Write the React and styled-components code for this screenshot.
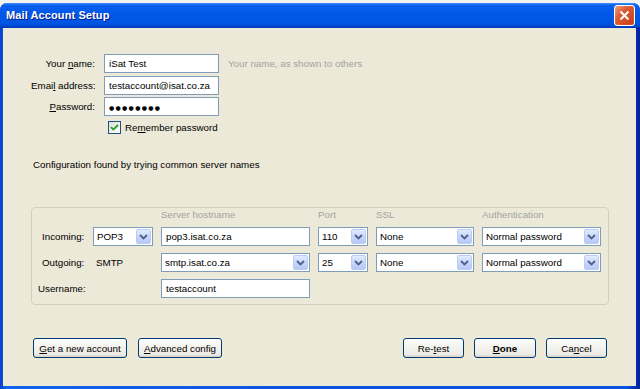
import React from 'react';
import styled, { createGlobalStyle } from 'styled-components';

const Global = createGlobalStyle`
  html, body { margin: 0; padding: 0; background: #f2f2f2; }
  body {
    width: 640px; height: 389px; overflow: hidden;
    font-family: "Liberation Sans", Arial, sans-serif;
    font-size: 9.75px; color: #000;
  }
  #root { height: 389px; }
  * { box-sizing: border-box; }
`;

const Window = styled.div`
  margin-top: 3px;
  height: 386px;
  display: flex;
  flex-direction: column;
  border-radius: 7px 7px 0 0;
  overflow: hidden;
  background: #0a50e2;
`;

const TitleBar = styled.div`
  flex: none;
  height: 25px;
  display: flex;
  align-items: center;
  justify-content: space-between;
  padding: 0 5px 0 6px;
  background: linear-gradient(180deg, #3d8ff7 0%, #0a5eec 10%, #0058e8 45%, #0054e2 82%, #0049d2 92%, #0036b6 100%);
`;

const Title = styled.div`
  color: #fff;
  font-weight: bold;
  font-size: 11px;
  letter-spacing: 0.1px;
  text-shadow: 1px 1px 0 #0b1c8a;
  padding-bottom: 1px;
`;

const CloseButton = styled.div`
  width: 21px;
  height: 21px;
  border: 1px solid #fff;
  border-radius: 3px;
  display: flex;
  align-items: center;
  justify-content: center;
  background: linear-gradient(135deg, #eda07e 0%, #dc5e36 35%, #d24a22 70%, #c33c14 100%);
  box-shadow: inset 0 0 1px #ffd8c6;
`;

const Frame = styled.div`
  flex: 1;
  display: flex;
  padding: 0 4px 3px 3px;
  background: linear-gradient(90deg, #0741c8 0%, #1164ee 1%, #0a52e0 50%, #0a52e0 98%, #001e9a 100%);
`;

const Content = styled.div`
  flex: 1;
  display: flex;
  flex-direction: column;
  background: #ece9d8;
  padding: 26px 27px 28px 28px;
`;

const IdentityGrid = styled.div`
  display: grid;
  grid-template-columns: 64px 115px auto;
  grid-auto-rows: 19px;
  column-gap: 9px;
  row-gap: 2.5px;
  align-items: center;
`;

const Label = styled.div`
  white-space: nowrap;
  text-align: ${p => (p.$right ? 'right' : 'left')};
  margin-left: ${p => p.$shift || 0}px;
`;

const Key = styled.span`
  text-decoration: underline;
`;

const Field = styled.div`
  height: 19px;
  width: 100%;
  border: 1px solid #7f9db9;
  background: #fff;
  display: flex;
  align-items: center;
  padding-left: 4px;
  white-space: nowrap;
  overflow: hidden;
`;

const Dots = styled.span`
  font-family: "DejaVu Sans", sans-serif;
  font-size: 6px;
  letter-spacing: 1.3px;
  padding-top: 1px;
`;

const Hint = styled.div`
  color: #a3a3a3;
  white-space: nowrap;
`;

const CheckRow = styled.div`
  display: flex;
  align-items: center;
  gap: 4px;
  margin: 5px 0 0 77px;
`;

const CheckBox = styled.div`
  width: 13px;
  height: 13px;
  border: 1px solid #1c5180;
  background: linear-gradient(135deg, #dcdcd7, #ffffff);
  display: flex;
  align-items: center;
  justify-content: center;
`;

const Note = styled.div`
  margin: 25px 0 0 2px;
  line-height: 12px;
`;

const Group = styled.div`
  margin-top: 36px;
  border: 1px solid #d0d0bf;
  border-radius: 4px;
  padding: 1px 6px 6px 10px;
`;

const ServerGrid = styled.div`
  display: grid;
  grid-template-columns: 43px 60px 149px 50px 98px 119px;
  grid-template-rows: 11px 19px 19px 19px;
  column-gap: 8px;
  row-gap: 7px;
  align-items: center;
`;

const Head = styled.div`
  color: #a3a3a3;
  grid-column: ${p => p.$col};
  white-space: nowrap;
  line-height: 11px;
`;

const Cell = styled.div`
  grid-column: ${p => p.$col};
  padding-left: ${p => p.$pad || 0}px;
  white-space: nowrap;
`;

const Combo = styled.div`
  height: 19px;
  width: 100%;
  border: 1px solid #7f9db9;
  background: #fff;
  display: flex;
  align-items: center;
  padding: 0 1px 0 3px;
  white-space: nowrap;
`;

const ComboText = styled.span`
  flex: 1;
  overflow: hidden;
`;

const ArrowButton = styled.span`
  flex: none;
  width: 15px;
  height: 15px;
  border: 1px solid #bccbf2;
  border-radius: 2px;
  background: linear-gradient(180deg, #e3ebfe 0%, #c9d8fc 45%, #b6c9f7 100%);
  display: flex;
  align-items: center;
  justify-content: center;
`;

const ButtonBar = styled.div`
  margin-top: auto;
  display: flex;
  justify-content: space-between;
  padding: 0 2px;
`;

const ButtonGroup = styled.div`
  display: flex;
  gap: ${p => p.$gap}px;
`;

const Button = styled.div`
  width: ${p => p.$w}px;
  height: 20px;
  border: 1px solid #003c74;
  border-radius: 3px;
  background: linear-gradient(180deg, #ffffff 0%, #f4f3ee 40%, #ecebe6 85%, #d6d0c5 100%);
  display: flex;
  align-items: center;
  justify-content: center;
  font-weight: ${p => (p.$bold ? 'bold' : 'normal')};
  white-space: nowrap;
`;

const Chevron = () => (
  <svg width="9" height="6" viewBox="0 0 9 6">
    <path d="M1 1 L4.5 4.5 L8 1" fill="none" stroke="#4d6185" strokeWidth="1.8" />
  </svg>
);

const Select = ({ children }) => (
  <Combo>
    <ComboText>{children}</ComboText>
    <ArrowButton>
      <Chevron />
    </ArrowButton>
  </Combo>
);

export default function App() {
  return (
    <>
      <Global />
      <Window>
        <TitleBar>
          <Title>Mail Account Setup</Title>
          <CloseButton>
            <svg width="11" height="11" viewBox="0 0 11 11">
              <path d="M1.5 1.5 L9.5 9.5 M9.5 1.5 L1.5 9.5" stroke="#fff" strokeWidth="2" />
            </svg>
          </CloseButton>
        </TitleBar>
        <Frame>
          <Content>
            <IdentityGrid>
              <Label $right>Your <Key>n</Key>ame:</Label>
              <Field>iSat Test</Field>
              <Hint>Your name, as shown to others</Hint>
              <Label $right>Emai<Key>l</Key> address:</Label>
              <Field>testaccount@isat.co.za</Field>
              <span />
              <Label $right><Key>P</Key>assword:</Label>
              <Field><Dots>●●●●●●●●</Dots></Field>
              <span />
            </IdentityGrid>
            <CheckRow>
              <CheckBox>
                <svg width="9" height="9" viewBox="0 0 9 9">
                  <path d="M1 4.2 L3.4 6.6 L8 2" fill="none" stroke="#21a121" strokeWidth="1.8" />
                </svg>
              </CheckBox>
              <span>Re<Key>m</Key>ember password</span>
            </CheckRow>
            <Note>Configuration found by trying common server names</Note>
            <Group>
              <ServerGrid>
                <Head $col={3}>Server hostname</Head>
                <Head $col={4}>Port</Head>
                <Head $col={5}>SSL</Head>
                <Head $col={6}>Authentication</Head>

                <Cell $col={1}>Incoming:</Cell>
                <Cell $col={2}><Select>POP3</Select></Cell>
                <Cell $col={3}><Field>pop3.isat.co.za</Field></Cell>
                <Cell $col={4}><Select>110</Select></Cell>
                <Cell $col={5}><Select>None</Select></Cell>
                <Cell $col={6}><Select>Normal password</Select></Cell>

                <Cell $col={1}>Outgoing:</Cell>
                <Cell $col={2} $pad={3}>SMTP</Cell>
                <Cell $col={3}><Select>smtp.isat.co.za</Select></Cell>
                <Cell $col={4}><Select>25</Select></Cell>
                <Cell $col={5}><Select>None</Select></Cell>
                <Cell $col={6}><Select>Normal password</Select></Cell>

                <Cell $col="1 / 3"><Label $shift={-4}>Username:</Label></Cell>
                <Cell $col={3}><Field>testaccount</Field></Cell>
              </ServerGrid>
            </Group>
            <ButtonBar>
              <ButtonGroup $gap={11}>
                <Button $w={94}><Key>G</Key>et a new account</Button>
                <Button $w={84}><Key>A</Key>dvanced config</Button>
              </ButtonGroup>
              <ButtonGroup $gap={10}>
                <Button $w={61}>Re-<Key>t</Key>est</Button>
                <Button $w={62} $bold><Key>D</Key>one</Button>
                <Button $w={61}>Ca<Key>n</Key>cel</Button>
              </ButtonGroup>
            </ButtonBar>
          </Content>
        </Frame>
      </Window>
    </>
  );
}
